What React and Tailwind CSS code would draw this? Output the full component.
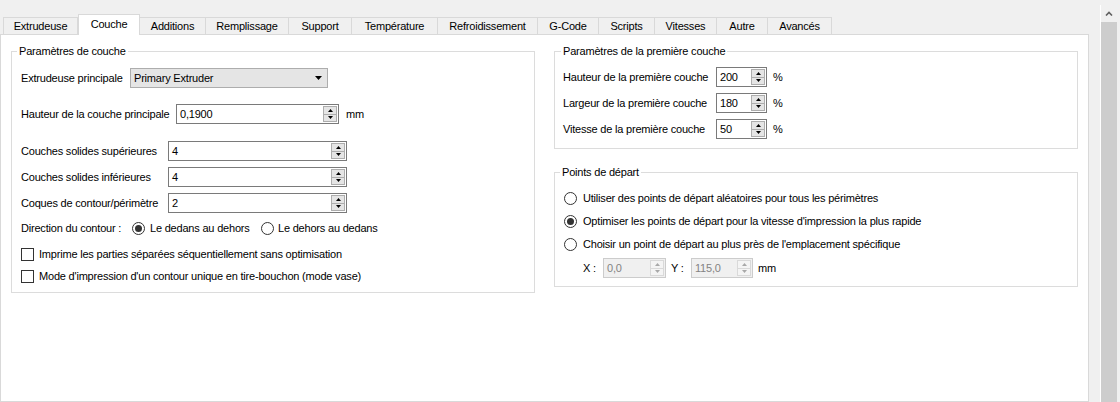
import React from 'react'

const TABS = [
  { name: 'Extrudeuse', w: 'w-[75px]' },
  { name: 'Couche', w: 'w-[62px]', active: true },
  { name: 'Additions', w: 'w-[66px]' },
  { name: 'Remplissage', w: 'w-[83px]' },
  { name: 'Support', w: 'w-[63px]' },
  { name: 'Température', w: 'w-[86px]' },
  { name: 'Refroidissement', w: 'w-[100px]' },
  { name: 'G-Code', w: 'w-[61px]' },
  { name: 'Scripts', w: 'w-[56px]' },
  { name: 'Vitesses', w: 'w-[62px]' },
  { name: 'Autre', w: 'w-[51px]' },
  { name: 'Avancés', w: 'w-[64px]' },
]

function Up({ disabled }) {
  return (
    <svg width="5" height="3" viewBox="0 0 5 3">
      <polygon points="2.5,0 5,3 0,3" fill={disabled ? '#a8a8a8' : '#000'} />
    </svg>
  )
}

function Down({ disabled }) {
  return (
    <svg width="5" height="3" viewBox="0 0 5 3">
      <polygon points="0,0 5,0 2.5,3" fill={disabled ? '#a8a8a8' : '#000'} />
    </svg>
  )
}

function Spin({ disabled }) {
  return (
    <div className="flex py-px pr-px">
      <div
        className={
          disabled
            ? 'flex flex-col w-[14px] border border-[#d9d9d9] bg-[#f4f4f4]'
            : 'flex flex-col w-[14px] border border-[#adadad] bg-[#e5e5e5]'
        }
      >
        <div
          className={
            disabled
              ? 'flex flex-1 items-center justify-center border-b border-[#d9d9d9]'
              : 'flex flex-1 items-center justify-center border-b border-[#adadad]'
          }
        >
          <Up disabled={disabled} />
        </div>
        <div className="flex flex-1 items-center justify-center">
          <Down disabled={disabled} />
        </div>
      </div>
    </div>
  )
}

function Field({ value, w, disabled }) {
  return (
    <div
      className={
        disabled
          ? `flex h-[20px] shrink-0 border border-[#cccccc] bg-[#f0f0f0] text-[#838383] ${w}`
          : `flex h-[20px] shrink-0 border border-[#7a7a7a] bg-white ${w}`
      }
    >
      <span className="flex flex-1 items-center pl-[3px]">{value}</span>
      <Spin disabled={disabled} />
    </div>
  )
}

function Radio({ checked }) {
  return (
    <span className="flex h-[13px] w-[13px] shrink-0 items-center justify-center rounded-full border border-[#333333] bg-white">
      {checked && <span className="h-[7px] w-[7px] rounded-full bg-[#333333]" />}
    </span>
  )
}

function Check() {
  return <span className="h-[13px] w-[13px] shrink-0 border border-[#333333] bg-white" />
}

function Group({ title, className, legend, children }) {
  return (
    <fieldset className={`border border-[#dcdcdc] ${className}`}>
      <legend className={`px-[2px] leading-[16px] ${legend}`}>{title}</legend>
      {children}
    </fieldset>
  )
}

export default function App() {
  return (
    <div className="flex h-[402px] w-[1120px] overflow-hidden bg-[#f0f0f0] font-['Liberation_Sans',Arial,sans-serif] text-[11px] tracking-[-0.2px] text-black">
      <div className="flex w-[1089px] shrink-0 flex-col">
        {/* tabs */}
        <div className="flex h-[34px] items-end pl-[3px]">
          {TABS.map((t) =>
            t.active ? (
              <div
                key={t.name}
                className={`relative z-10 -mb-px flex h-[21px] items-center justify-center border-x border-t border-[#d9d9d9] bg-white pb-[2px] ${t.w}`}
              >
                {t.name}
              </div>
            ) : (
              <div
                key={t.name}
                className={`flex h-[17px] items-center justify-center border-r border-t border-[#d9d9d9] bg-[#f0f0f0] first:border-l ${t.w}`}
              >
                {t.name}
              </div>
            )
          )}
        </div>

        {/* pane */}
        <div className="grid flex-1 grid-cols-2 items-start gap-[19px] border border-[#d9d9d9] bg-white pl-[10px] pr-[10px] pt-[8px]">
          <Group title="Paramètres de couche" className="pb-[8px] pl-[9px]" legend="-ml-[4px]">
            <div className="mt-[9px] flex h-[20px] items-center">
              <span className="w-[109px] shrink-0">Extrudeuse principale</span>
              <div className="flex h-[20px] w-[198px] items-center justify-between border border-[#adadad] bg-[#e5e5e5] pl-[3px] pr-[5px]">
                <span>Primary Extruder</span>
                <svg width="7" height="4" viewBox="0 0 7 4">
                  <polygon points="0,0 7,0 3.5,4" fill="#000" />
                </svg>
              </div>
            </div>

            <div className="mt-[16px] flex h-[20px] items-center">
              <span className="w-[155px] shrink-0">Hauteur de la couche principale</span>
              <Field value="0,1900" w="w-[163px]" />
              <span className="ml-[7px]">mm</span>
            </div>

            <div className="mt-[17px] flex flex-col gap-[6px]">
              {[
                ['Couches solides supérieures', '4'],
                ['Couches solides inférieures', '4'],
                ['Coques de contour/périmètre', '2'],
              ].map(([label, v]) => (
                <div key={label} className="flex h-[20px] items-center">
                  <span className="w-[147px] shrink-0">{label}</span>
                  <Field value={v} w="w-[179px]" />
                </div>
              ))}
            </div>

            <div className="mt-[8px] flex h-[15px] items-center">
              <span className="w-[111px] shrink-0">Direction du contour :</span>
              <Radio checked />
              <span className="ml-[5px] w-[111px] shrink-0">Le dedans au dehors</span>
              <Radio />
              <span className="ml-[4px]">Le dehors au dedans</span>
            </div>

            <div className="mt-[11px] flex h-[15px] items-center gap-[5px]">
              <Check />
              <span>Imprime les parties séparées séquentiellement sans optimisation</span>
            </div>
            <div className="mt-[7px] flex h-[15px] items-center gap-[5px]">
              <Check />
              <span>Mode d'impression d'un contour unique en tire-bouchon (mode vase)</span>
            </div>
          </Group>

          <div className="flex flex-col">
            <Group title="Paramètres de la première couche" className="pb-[9px] pl-[8px]" legend="-ml-[2px]">
              <div className="mt-[8px] flex flex-col gap-[6px]">
                {[
                  ['Hauteur de la première couche', '200'],
                  ['Largeur de la première couche', '180'],
                  ['Vitesse de la première couche', '50'],
                ].map(([label, v]) => (
                  <div key={label} className="flex h-[20px] items-center">
                    <span className="w-[153px] shrink-0">{label}</span>
                    <Field value={v} w="w-[51px]" />
                    <span className="ml-[6px]">%</span>
                  </div>
                ))}
              </div>
            </Group>

            <Group title="Points de départ" className="mt-[15px] pb-[8px] pl-[9px]" legend="-ml-[4px]">
              <div className="mt-[11px] flex h-[15px] items-center gap-[6px]">
                <Radio />
                <span>Utiliser des points de départ aléatoires pour tous les périmètres</span>
              </div>
              <div className="mt-[8px] flex h-[15px] items-center gap-[6px]">
                <Radio checked />
                <span>Optimiser les points de départ pour la vitesse d'impression la plus rapide</span>
              </div>
              <div className="mt-[8px] flex h-[15px] items-center gap-[6px]">
                <Radio />
                <span>Choisir un point de départ au plus près de l'emplacement spécifique</span>
              </div>
              <div className="ml-[19px] mt-[6px] flex h-[20px] items-center">
                <span className="w-[20px] shrink-0">X :</span>
                <Field value="0,0" w="w-[63px]" disabled />
                <span className="ml-[5px] w-[20px] shrink-0">Y :</span>
                <Field value="115,0" w="w-[62px]" disabled />
                <span className="ml-[5px]">mm</span>
              </div>
            </Group>
          </div>
        </div>
      </div>

      {/* scrollbar */}
      <div className="ml-[11px] mt-[5px] flex w-[17px] shrink-0 flex-col border-l border-white">
        <div className="flex h-[17px] items-center justify-center">
          <svg width="8" height="5" viewBox="0 0 8 5">
            <path d="M1 4.5 L4 1.5 L7 4.5" stroke="#606060" strokeWidth="1.6" fill="none" />
          </svg>
        </div>
        <div className="flex-1 bg-[#cdcdcd]" />
      </div>
    </div>
  )
}
